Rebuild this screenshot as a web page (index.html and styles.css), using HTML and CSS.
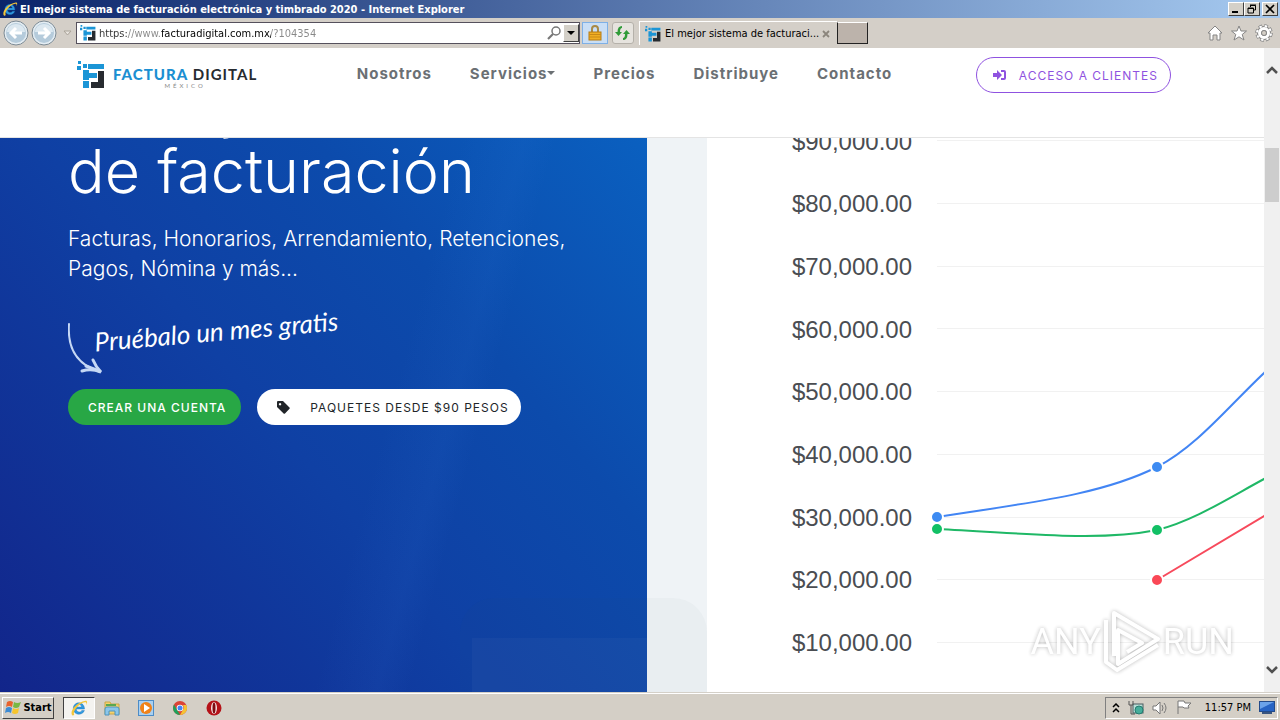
FILE: index.html
```html
<!DOCTYPE html>
<html lang="es">
  <head>
    <meta charset="UTF-8" />
    <meta name="viewport" content="width=device-width, initial-scale=1.0" />
    <title>El mejor sistema de facturación electrónica y timbrado 2020</title>
    <link rel="stylesheet" href="styles.css">
  </head>
  <body>
    <!-- Shared icons -->
    <svg class="sprite" aria-hidden="true">
      <symbol id="ie" viewBox="0 0 18 18">
        <path d="M14.5 10H6.2c.2 3.6 4.700 3.800 5.600 1.400h2.600C12.600 17 3.300 16.500 3.300 9.500 3.300 2 14.500 1.800 14.500 10zM6.300 8h5.300C11.300 4.700 6.600 4.800 6.300 8z" fill="#2f9be0" stroke="#1c6fb8" stroke-width=".4"/>
        <path d="M2.500 16.500C-1 14 5 3.500 15.500 1.800c2.500-.2 1.500 3 .6 4.200.5-2 .4-3-1.300-2.800C9 4 2 13 4.300 15.600c-.6.9-1.200 1.100-1.800.9z" fill="#f3c63a"/>
      </symbol>
      <symbol id="fd" viewBox="0 0 28 28">
        <path d="M11 3h16v5H11zM6 9h6v3h8v5h-8v2H6zM6 20h6v7H6z" fill="#1b95d6"/>
        <path d="M21 10h6v17H14v-6h7z" fill="#272b30"/>
        <path d="M0 5h4v4H0zM1 0h3v3H1zM6 3h4v4H6z" fill="#1b95d6"/>
      </symbol>
    </svg>

    <div class="titlebar">
      <svg class="icon16"><use href="#ie"/></svg>
      <span class="window-title">El mejor sistema de facturación electrónica y timbrado 2020 - Internet Explorer</span>
      <div class="window-buttons">
        <button aria-label="Minimizar"><svg width="10" height="10"><path d="M1 8h6" stroke="#000" stroke-width="2"/></svg></button>
        <button aria-label="Restaurar"><svg width="10" height="10" fill="none" stroke="#000"><path d="M3 1h6M3 1.500h5.500v4.500H7M3.500 1v2M1 4h5.500v5H1zM1 4.500h5"/></svg></button>
        <button class="close" aria-label="Cerrar"><svg width="10" height="10"><path d="M1 1l8 8M9 1L1 9" stroke="#000" stroke-width="1.700"/></svg></button>
      </div>
    </div>

    <div class="toolbar">
      <button class="round" aria-label="Atrás"><svg width="26" height="26"><circle cx="13" cy="13" r="12" fill="#e4edf3" stroke="#7d8b95"/><circle cx="13" cy="13" r="10" fill="#b5cbdb"/><path d="M4 12a9 8 0 0 1 18 0z" fill="#dce8f0"/><path d="M19 13H8M13 8l-5 5 5 5" fill="none" stroke="#fff" stroke-width="3"/></svg></button>
      <button class="round" aria-label="Adelante"><svg width="26" height="26"><circle cx="13" cy="13" r="12" fill="#e4edf3" stroke="#7d8b95"/><circle cx="13" cy="13" r="10" fill="#b5cbdb"/><path d="M4 12a9 8 0 0 1 18 0z" fill="#dce8f0"/><path d="M7 13h11M13 8l5 5-5 5" fill="none" stroke="#fff" stroke-width="3"/></svg></button>
      <button class="recent" aria-label="Recientes"><svg width="9" height="6"><path d="M1 1h7L4.500 5z" fill="#e8e4de" stroke="#aaa49a"/></svg></button>
      <div class="address">
        <svg class="icon16"><use href="#fd"/></svg>
        <input type="text" aria-label="Dirección" value="https://www.facturadigital.com.mx/?104354">
        <svg width="14" height="14" fill="none" stroke="#777"><circle cx="9" cy="5" r="4" stroke-width="1.500"/><path d="M6 8l-5 5" stroke-width="2.200"/></svg>
        <button class="drop" aria-label="Historial"><svg width="8" height="5"><path d="M0 0h8L4 4z"/></svg></button>
      </div>
      <button class="tool lock" aria-label="Seguridad"><svg width="14" height="18"><path d="M4 8V5a3 3 0 0 1 6 0v3" fill="none" stroke="#a98a45" stroke-width="2"/><rect x="1" y="8" width="12" height="8" fill="#f0ae23" stroke="#b67b14"/><path d="M1 10.500h12M1 13h12" stroke="#c98a17"/></svg></button>
      <button class="tool" aria-label="Actualizar"><svg width="16" height="16" fill="#2f9b38"><path d="M7 1v2q-2 0-2 4h2l-3.500 4L0 7h2.500Q2.500 1 7 1zM8 15v-2q2 0 2-4H8l3.500-4L15 9h-2.500q0 6-4.500 6z"/></svg></button>
      <div class="tab">
        <svg class="icon16"><use href="#fd"/></svg>
        <span>El mejor sistema de facturaci...</span>
        <button aria-label="Cerrar pestaña"><svg width="8" height="8"><path d="M1 1l6 6M7 1L1 7" stroke="#8b857c" stroke-width="1.800"/></svg></button>
      </div>
      <button class="new-tab" aria-label="Nueva pestaña"></button>
      <div class="tools">
        <button aria-label="Inicio"><svg width="16" height="16" fill="#fff" stroke="#858585"><path d="M8 1l7 7h-2v7h-3v-5H6v5H3V8H1z"/></svg></button>
        <button aria-label="Favoritos"><svg width="16" height="16" fill="#fff" stroke="#858585"><path d="M8 1l2 5h5.500l-4.300 3.500L13 15l-5-3.200L3 15l1.800-5.500L.5 6H6z"/></svg></button>
        <button aria-label="Herramientas"><svg width="18" height="18" fill="none"><circle cx="9" cy="9" r="7" stroke="#858585" stroke-width="3.500" stroke-dasharray="3.500 2"/><circle cx="9" cy="9" r="4.500" stroke="#858585" stroke-width="5"/><circle cx="9" cy="9" r="7" stroke="#fff" stroke-width="2" stroke-dasharray="2.500 3" stroke-dashoffset="-.5"/><circle cx="9" cy="9" r="4.500" stroke="#fff" stroke-width="3"/><circle cx="9" cy="9" r="2.500" fill="#d4cfc6" stroke="#858585"/></svg></button>
      </div>
    </div>

    <div class="viewport">
      <div class="page">
        <header class="header">
          <a href="#" class="logo">
            <svg width="28" height="28"><use href="#fd"/></svg>
            <span class="brand"><span class="brand-name"><b>FACTURA</b> DIGITAL</span><small>MÉXICO</small></span>
          </a>
          <nav class="nav">
            <a href="#">Nosotros</a>
            <a href="#" class="has-menu">Servicios</a>
            <a href="#">Precios</a>
            <a href="#">Distribuye</a>
            <a href="#">Contacto</a>
          </nav>
          <a href="#" class="btn btn-outline">
            <svg width="13" height="12" viewBox="0 0 13 12" fill="#8f52e0"><path d="M0 4h4V1l5 5-5 5V8H0z"/><path d="M8 1h3a2 2 0 0 1 2 2v6a2 2 0 0 1-2 2H8V9h3V3H8z"/></svg>
            ACCESO A CLIENTES
          </a>
        </header>

        <main class="hero">
          <section class="intro">
            <h1>El mejor sistema<br>de facturación</h1>
            <p class="lead">Facturas, Honorarios, Arrendamiento, Retenciones,<br>Pagos, Nómina y más...</p>
            <div class="trial">
              <svg width="36" height="52" fill="none" stroke="#c5d8f5" stroke-linecap="round"><path d="M1 1C-1 28 12 42 30 48" stroke-width="2"/><path d="M25 37c2 5 5 9 8 12-7-3-13-3-19-1" stroke-width="3"/><path d="M18 43l13 5" stroke-width="3"/></svg>
              <span>Pruébalo un mes gratis</span>
            </div>
            <div class="actions">
              <a href="#" class="btn btn-green">CREAR UNA CUENTA</a>
              <a href="#" class="btn btn-white">
                <svg width="13" height="13" viewBox="0 0 13 13"><path d="M1 0h5l6.500 6.500a1 1 0 0 1 0 1.300L8 12.500a1 1 0 0 1-1.400 0L0 6V1a1 1 0 0 1 1-1zm2 2a1.200 1.200 0 1 0 .1 0z" fill="#212529"/></svg>
                PAQUETES DESDE $90 PESOS
              </a>
            </div>
          </section>
          <div class="divider"></div>
          <section class="chart">
            <svg width="900" height="560" role="img" aria-label="Ventas">
              <g class="grid">
                <path d="M230 2.500h670M230 65.500h670M230 128.500h670M230 190.500h670M230 253.500h670M230 316.500h670M230 379.500h670M230 441.500h670M230 504.500h670"/>
              </g>
              <g class="labels">
                <text x="205" y="12">$90,000.00</text>
                <text x="205" y="74">$80,000.00</text>
                <text x="205" y="137">$70,000.00</text>
                <text x="205" y="200">$60,000.00</text>
                <text x="205" y="262">$50,000.00</text>
                <text x="205" y="325">$40,000.00</text>
                <text x="205" y="388">$30,000.00</text>
                <text x="205" y="450">$20,000.00</text>
                <text x="205" y="513">$10,000.00</text>
              </g>
              <g class="series blue">
                <path d="M230 379C318 365 392 358 450 329C490 308 520 270 557 235L620 170"/>
                <circle cx="230" cy="379" r="6"/><circle cx="450" cy="329" r="6"/>
              </g>
              <g class="series green">
                <path d="M230 391C318 395 390 404 450 392C486 383 520 361 557 341L620 308"/>
                <circle cx="230" cy="391" r="6"/><circle cx="450" cy="392" r="6"/>
              </g>
              <g class="series red">
                <path d="M450 442L557 378L620 342"/>
                <circle cx="450" cy="442" r="6"/>
              </g>
            </svg>
          </section>
          <div class="ghost"><div></div></div>
        </main>
      </div>
      <div class="scrollbar">
        <svg width="12" height="8"><path d="M1 7l5-5 5 5" fill="none" stroke="#505050" stroke-width="2.500"/></svg>
        <div class="thumb"></div>
        <svg width="12" height="8"><path d="M1 1l5 5 5-5" fill="none" stroke="#505050" stroke-width="2.500"/></svg>
      </div>
      <div class="watermark">
        <span>ANY</span>
        <svg width="58" height="64" viewBox="0 0 58 64" fill="none" stroke="#fff" stroke-width="4" stroke-linejoin="round"><path d="M11 46V3l44 26-40 25V20l24 13-15 9M3 10v42l11 8 41-25"/></svg>
        <span>RUN</span>
      </div>
    </div>

    <footer class="taskbar">
      <button class="start">
        <svg width="18" height="16"><path d="M3 2q3-2 6 0L8 7q-3-2-6 0z" fill="#e8622c"/><path d="M10 2q3 2 7 0l-2 5q-3 2-6 0z" fill="#79b843"/><path d="M2 8q3-2 6 0l-1 5q-3-2-6 0z" fill="#3c8bd4"/><path d="M9 8q3 2 6 0l-1 5q-3 2-6 0z" fill="#f7c52d"/></svg>
        Start
      </button>
      <button class="task active" aria-label="Internet Explorer"><svg width="18" height="18"><use href="#ie"/></svg></button>
      <button class="task" aria-label="Explorador"><svg width="18" height="16"><path d="M2 2h5l1 2h8v10H2z" fill="#f4d26c" stroke="#c9a646"/><path d="M3 5h10" stroke="#5aa84f" stroke-width="2"/><path d="M2 15V9q0-2 2-2h10q2 0 2 2v6h-4v-4H6v4z" fill="#8ac6ea" stroke="#4d93be"/></svg></button>
      <button class="task" aria-label="Reproductor"><svg width="16" height="16"><rect x=".5" y=".5" width="15" height="15" fill="#a9d0f0" stroke="#4c8cc7"/><circle cx="8" cy="8" r="6" fill="#f08218"/><path d="M6 4l6 4-6 4z" fill="#fff"/></svg></button>
      <button class="task" aria-label="Chrome"><svg width="14" height="14"><circle cx="7" cy="7" r="7" fill="#db4437"/><path d="M1 3.500L7 14A7 7 0 0 1 1 3.500z" fill="#1fa15a"/><path d="M7 14l4-7-1-3h3.300A7 7 0 0 1 7 14z" fill="#f5c432"/><circle cx="7" cy="7" r="3.300" fill="#fff"/><circle cx="7" cy="7" r="2.500" fill="#4285f4"/></svg></button>
      <button class="task" aria-label="Opera"><svg width="16" height="16"><circle cx="8" cy="8" r="7.500" fill="#b51218"/><ellipse cx="8" cy="8" rx="3" ry="6" fill="#f6e3e3"/><ellipse cx="8" cy="8" rx="1.500" ry="5.500" fill="#7d0a0f"/></svg></button>
      <div class="tray">
        <svg width="8" height="10" fill="none" stroke="#000" stroke-width="1.500"><path d="M1 4l3-3 3 3M1 9l3-3 3 3"/></svg>
        <svg width="16" height="16"><rect x="5" y="4" width="10" height="9" fill="#b8ddd6" stroke="#4b5c60"/><circle cx="11" cy="10" r="4" fill="#46ad9b" stroke="#257d70"/><path d="M1 1v4h4V1M3 5v9h4" fill="none" stroke="#555"/></svg>
        <svg width="16" height="14" fill="#fff" stroke="#777"><path d="M1 5h3l4-4v12L4 9H1z"/><path d="M10 4q2 3 0 6M12 2q4 5 0 10" fill="none"/></svg>
        <svg width="16" height="15" fill="#fff" stroke="#777"><path d="M2 1v13M2 1h6l1 2h6l-3 3 1 2H8L7 7H2"/></svg>
        <span class="clock">11:57 PM</span>
        <svg width="16" height="14"><rect x=".5" y=".5" width="15" height="10" fill="#2764c4" stroke="#234b8a"/><path d="M1 1h14L1 8z" fill="#6ba3ea"/><path d="M3 12h10" stroke="#39557f" stroke-width="2"/></svg>
      </div>
    </footer>
  </body>
</html>
```
FILE: styles.css
```css
html,
body {
  margin: 0;
  padding: 0;
  height: 100%;
}

body {
  display: flex;
  flex-direction: column;
  overflow: hidden;
  background: #fff;
  font-family: Inter, "Open Sans", sans-serif;
}

a {
  text-decoration: none;
}

button {
  display: flex;
  align-items: center;
  justify-content: center;
  padding: 0;
  border: none;
  background: none;
}

svg {
  flex-shrink: 0;
}

.sprite {
  position: absolute;
  width: 0;
  height: 0;
}

.icon16 {
  width: 16px;
  height: 16px;
}

/* Window frame */
.titlebar,
.toolbar,
.taskbar {
  font-family: "DejaVu Sans Condensed", "DejaVu Sans", sans-serif;
  font-size: 11px;
}

.titlebar {
  display: flex;
  align-items: center;
  flex-shrink: 0;
  height: 18px;
  padding: 0 2px;
  background: linear-gradient(90deg, #0a246a, #a6caf0);
}

.window-title {
  flex-grow: 1;
  margin-left: 2px;
  font-weight: bold;
  color: #fff;
  white-space: nowrap;
}

.window-buttons {
  display: flex;
}

.window-buttons button {
  width: 16px;
  height: 14px;
  border: 1px solid;
  border-color: #fff #404040 #404040 #fff;
  background: #d4d0c8;
}

.window-buttons .close {
  margin-left: 2px;
}

.toolbar {
  display: flex;
  align-items: center;
  flex-shrink: 0;
  height: 30px;
  padding: 0 7px 0 2px;
  background: #d4cfc8;
}

.toolbar .round {
  width: 28px;
}

.toolbar .recent {
  width: 18px;
}

.address {
  display: flex;
  align-items: center;
  box-sizing: border-box;
  width: 504px;
  height: 22px;
  padding-left: 3px;
  border: 1px solid #55505c;
  background: #fff;
}

.address input {
  flex-grow: 1;
  padding: 0 3px;
  border: none;
  outline: none;
  font: inherit;
  color: transparent;
  /* only the domain is shown in black */
  background: linear-gradient(90deg, #333 32px, #888 32px, #888 65px, #000 65px, #000 175px, #888 175px);
  background-clip: text;
  -webkit-background-clip: text;
}

.address .drop {
  width: 16px;
  height: 18px;
  margin-left: 2px;
  border: 1px solid;
  border-color: #fff #404040 #404040 #fff;
  background: #d4d0c8;
}

.tool {
  width: 22px;
  height: 22px;
  margin-left: 4px;
  border: 1px solid #b5b1aa;
  border-radius: 3px;
  background: #e6e3de;
}

.tool.lock {
  width: 26px;
  margin-left: 2px;
  border-color: #7eb0e6;
  border-radius: 0;
  background: #c9def5;
}

.tab {
  display: flex;
  align-items: center;
  box-sizing: border-box;
  width: 198px;
  height: 24px;
  margin-left: 5px;
  padding: 0 7px 0 5px;
  border-top: 1px solid #fff;
  border-left: 1px solid #fff;
}

.tab span {
  flex-grow: 1;
  margin-left: 4px;
  white-space: nowrap;
}

.new-tab {
  width: 31px;
  height: 22px;
  border: 1px solid #222;
  border-top-color: #fff;
  background: #bcb3ab;
}

.tools {
  display: flex;
  gap: 8px;
  margin-left: auto;
}

/* Page */
.viewport {
  position: relative;
  display: flex;
  flex-grow: 1;
  min-height: 0;
}

.page {
  display: flex;
  flex-direction: column;
  flex-grow: 1;
  min-width: 0;
}

.header {
  display: flex;
  align-items: flex-start;
  justify-content: space-between;
  box-sizing: border-box;
  flex-shrink: 0;
  height: 90px;
  padding: 9px 93px 0 77px;
  border-bottom: 1px solid #e4e4e4;
  background: #fff;
}

.logo {
  display: flex;
  gap: 8px;
  padding-top: 4px;
  font-family: Lato, sans-serif;
  color: #272b30;
}

.brand {
  display: flex;
  flex-direction: column;
  align-items: center;
  padding-top: 5px;
}

.brand-name {
  font-size: 15px;
  font-weight: bold;
  line-height: 16px;
  letter-spacing: 1px;
}

.brand-name b {
  color: #1b8fd2;
}

.brand small {
  font-size: 6px;
  line-height: 7px;
  letter-spacing: 3px;
  color: #888;
}

.nav {
  display: flex;
  gap: 38px;
  padding: 7px 0 0 16px;
}

.nav a {
  font-size: 15px;
  font-weight: bold;
  line-height: 20px;
  letter-spacing: 1px;
  color: #6b7074;
}

.nav .has-menu::after {
  content: "";
  display: inline-block;
  margin-bottom: 4px;
  border: 4px solid transparent;
  border-top-color: #6b7074;
  border-bottom: none;
}

.btn {
  display: flex;
  align-items: center;
  box-sizing: border-box;
  height: 36px;
  border-radius: 18px;
  font-size: 12px;
  letter-spacing: 1px;
  white-space: nowrap;
}

.btn-outline {
  gap: 13px;
  padding: 0 12px 0 16px;
  border: 1px solid #8f52e0;
  color: #8f52e0;
}

.btn-green {
  padding: 0 15px 0 20px;
  background: #28a745;
  color: #fff;
  font-weight: 500;
}

.btn-white {
  gap: 20px;
  padding: 0 12px 0 20px;
  background: #fff;
  color: #212529;
}

.hero {
  position: relative;
  display: grid;
  grid-template-columns: 647fr 60fr 557fr;
  flex-grow: 1;
  min-height: 0;
  overflow: hidden;
}

.intro {
  min-width: 0;
  padding-left: 68px;
  overflow: hidden;
  background:
    linear-gradient(105deg, transparent 58%, rgba(60, 130, 230, 0.07) 66%, transparent 70%),
    linear-gradient(50deg, #12258a 0%, #0f40a4 45%, #0c4bac 70%, #0a60c0 100%);
  color: #fff;
}

.intro h1 {
  margin: -67px 0 0;
  font-size: 61px;
  font-weight: 300;
  line-height: 67px;
  white-space: nowrap;
}

.lead {
  margin: 19px 0 0;
  font-size: 21px;
  font-weight: 300;
  line-height: 30px;
  white-space: nowrap;
}

.trial {
  display: flex;
  align-items: flex-start;
  height: 66px;
  margin-top: 39px;
}

.trial span {
  margin-left: -10px;
  font-family: Lato, sans-serif;
  font-size: 26px;
  font-style: italic;
  line-height: 16px;
  white-space: nowrap;
  transform: rotate(-5deg);
}

.actions {
  display: flex;
  gap: 16px;
}

.divider {
  background: #eff3f6;
}

.chart {
  min-width: 0;
  overflow: hidden;
  background: #fff;
}

.grid path {
  stroke: #f1f1f1;
}

.labels text {
  font-family: "Liberation Sans", Arial, sans-serif;
  font-size: 24px;
  fill: #4a4d52;
  text-anchor: end;
}

.series path {
  fill: none;
  stroke-width: 2;
}

.series circle {
  stroke: #fff;
  stroke-width: 2;
}

.blue path {
  stroke: #4285f4;
}

.blue circle {
  fill: #3d8bf2;
}

.green path {
  stroke: #1fb866;
}

.green circle {
  fill: #12c065;
}

.red path {
  stroke: #f74a5c;
}

.red circle {
  fill: #fa4856;
}

/* Device fading in over the two panels */
.ghost {
  position: absolute;
  left: 460px;
  bottom: 0;
  box-sizing: border-box;
  width: 247px;
  height: 94px;
  padding: 40px 12px 0;
  border-radius: 34px 34px 0 0;
  background: rgba(60, 90, 110, 0.03);
}

.ghost div {
  height: 54px;
  background: rgba(255, 255, 255, 0.03);
}

.scrollbar {
  display: flex;
  flex-direction: column;
  align-items: center;
  flex-shrink: 0;
  box-sizing: border-box;
  width: 16px;
  padding: 18px 0;
  background: #f0f0f0;
}

.scrollbar .thumb {
  width: 14px;
  height: 54px;
  margin: 74px 0 auto;
  background: #cdcdcd;
}

.watermark {
  position: absolute;
  right: 46px;
  bottom: 18px;
  display: flex;
  align-items: center;
  gap: 2px;
  font-family: Roboto, sans-serif;
  font-size: 36px;
  color: #fff;
  opacity: 0.9;
  filter: drop-shadow(0 0 2px rgba(0, 0, 0, 0.3));
}

/* Taskbar */
.taskbar {
  display: flex;
  align-items: center;
  box-sizing: border-box;
  flex-shrink: 0;
  height: 28px;
  padding: 2px 2px 0;
  border-top: 1px solid #d4d0c8;
  box-shadow: inset 0 1px #fff;
  background: #d4cfc6;
}

.start {
  gap: 1px;
  width: 52px;
  height: 22px;
  border: 1px solid;
  border-color: #fff #404040 #404040 #fff;
  font-family: inherit;
  font-size: 11px;
  font-weight: bold;
}

.task {
  width: 34px;
  height: 22px;
}

.task.active {
  box-sizing: border-box;
  width: 32px;
  margin-left: 9px;
  border: 1px solid;
  border-color: #404040 #fff #fff #404040;
  background: #f4f3f0;
}

.tray {
  display: flex;
  align-items: center;
  gap: 8px;
  box-sizing: border-box;
  height: 22px;
  margin-left: auto;
  padding: 0 2px 0 6px;
  border: 1px solid;
  border-color: #808080 #fff #fff #808080;
}

.clock {
  margin-left: 5px;
}
```
